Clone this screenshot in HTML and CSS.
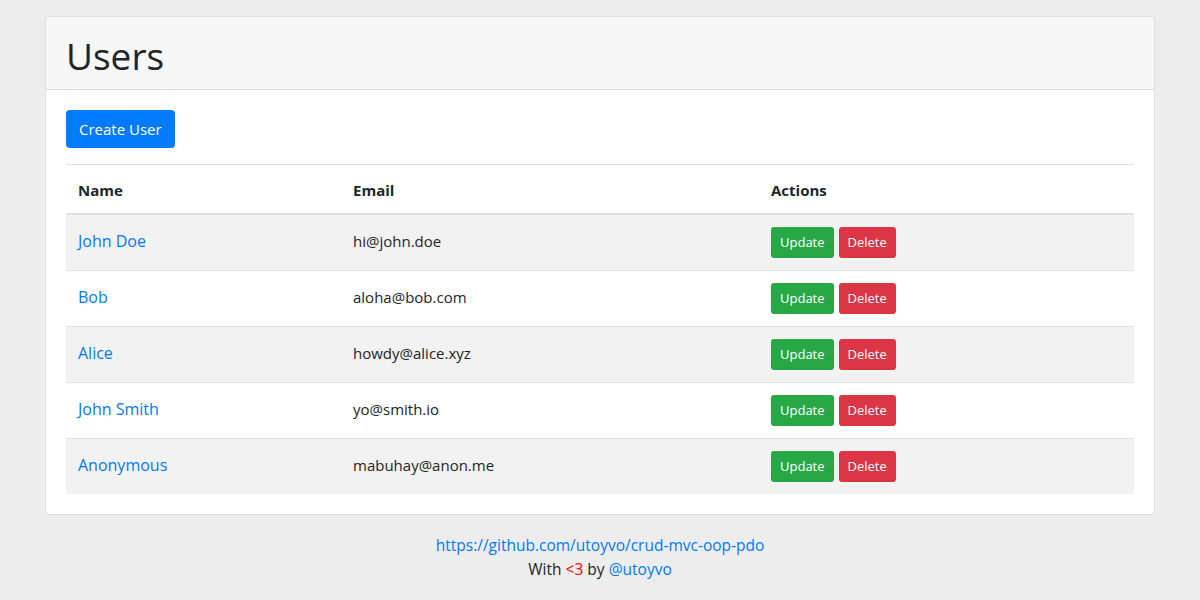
FILE: index.html
```html
<!DOCTYPE html>
<html lang="en">
<head>
<meta charset="utf-8">
<title>Users</title>
<link rel="stylesheet" href="styles.css">
</head>
<body>
<div class="container">
  <div class="card">
    <div class="card-header"><h1 class="title">Users</h1></div>
    <div class="card-body">
      <a class="btn btn-primary" href="#">Create User</a>
      <table class="table">
        <thead>
          <tr><th class="col-name">Name</th><th class="col-email">Email</th><th>Actions</th></tr>
        </thead>
        <tbody>
          <tr><td><a href="#">John Doe</a></td><td class="email">hi@john.doe</td><td class="act"><div class="actions"><a class="btn-sm btn-success" href="#">Update</a><a class="btn-sm btn-danger" href="#">Delete</a></div></td></tr>
          <tr><td><a href="#">Bob</a></td><td class="email">aloha@bob.com</td><td class="act"><div class="actions"><a class="btn-sm btn-success" href="#">Update</a><a class="btn-sm btn-danger" href="#">Delete</a></div></td></tr>
          <tr><td><a href="#">Alice</a></td><td class="email">howdy@alice.xyz</td><td class="act"><div class="actions"><a class="btn-sm btn-success" href="#">Update</a><a class="btn-sm btn-danger" href="#">Delete</a></div></td></tr>
          <tr><td><a href="#">John Smith</a></td><td class="email">yo@smith.io</td><td class="act"><div class="actions"><a class="btn-sm btn-success" href="#">Update</a><a class="btn-sm btn-danger" href="#">Delete</a></div></td></tr>
          <tr><td><a href="#">Anonymous</a></td><td class="email">mabuhay@anon.me</td><td class="act"><div class="actions"><a class="btn-sm btn-success" href="#">Update</a><a class="btn-sm btn-danger" href="#">Delete</a></div></td></tr>
        </tbody>
      </table>
    </div>
  </div>
  <footer class="footer">
    <a href="#">https://github.com/utoyvo/crud-mvc-oop-pdo</a>
    <div>With <span class="heart">&lt;3</span> by <a href="#">@utoyvo</a></div>
  </footer>
</div>
</body>
</html>
```
FILE: styles.css
```css
* { box-sizing: border-box; }
html, body { margin: 0; }
body {
  background: #ededed;
  font-family: "Open Sans", "Noto Sans", sans-serif;
  font-size: 16px;
  line-height: 24px;
  color: #212529;
}
a { color: #007bff; text-decoration: none; }
.container {
  width: 1140px;
  margin: 0 auto;
  padding: 16px 15px 0;
}
.card {
  background: #fff;
  border: 1px solid rgba(0,0,0,.125);
  border-radius: 4px;
  overflow: hidden;
}
.card-header {
  background: #f7f7f7;
  border-bottom: 1px solid rgba(0,0,0,.125);
  padding: 15px 20px 0;
  height: 73px;
}
.title {
  margin: 0;
  font-size: 37px;
  font-weight: 400;
  line-height: 48px;
}
.card-body { padding: 20px; }
.btn {
  display: inline-block;
  padding: 6px 12px;
  border: 1px solid transparent;
  border-radius: 4px;
  line-height: 24px;
  font-size: 15px;
  margin-bottom: 16px;
}
.btn-primary { background: #007bff; color: #fff; }
.table {
  width: 100%;
  border-collapse: collapse;
}
.table th, .table td {
  padding: 13px 12px 11px;
  text-align: left;
  vertical-align: top;
  border-top: 1px solid #dee2e6;
}
.table td { padding: 14px 12px 10px; }
.table td.act { padding: 12px; }
.table th { font-weight: 700; font-size: 15px; }
.table thead th {
  border-bottom: 2px solid #dee2e6;
}
.col-name { width: 275px; }
.col-email { width: 418px; }
.table tbody tr:nth-child(odd) { background: #f2f2f2; }
.table td.email { font-size: 15px; }
.actions { display: flex; gap: 5px; }
.btn-sm {
  display: inline-block;
  padding: 4px 8px;
  border: 1px solid transparent;
  font-size: 13px;
  line-height: 21px;
  border-radius: 3px;
  color: #fff;
}
.btn-success { background: #28a745; }
.btn-danger { background: #dc3545; }
.footer {
  text-align: center;
  padding-top: 18px;
  font-size: 15.5px;
}
.heart { color: #f00; }
```
